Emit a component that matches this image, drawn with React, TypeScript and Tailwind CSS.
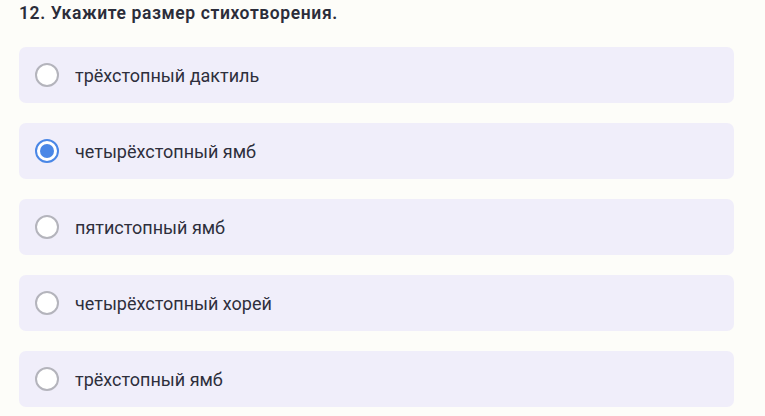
const options = [
  { label: 'трёхстопный дактиль', checked: false },
  { label: 'четырёхстопный ямб', checked: true },
  { label: 'пятистопный ямб', checked: false },
  { label: 'четырёхстопный хорей', checked: false },
  { label: 'трёхстопный ямб', checked: false },
];

function Radio({ checked }: { checked: boolean }) {
  if (checked) {
    return (
      <span className="w-[24px] h-[24px] rounded-full border-2 border-[#4a87e6] bg-white flex items-center justify-center shrink-0">
        <span className="w-[14px] h-[14px] rounded-full bg-[#4a87e6]" />
      </span>
    );
  }
  return <span className="w-[24px] h-[24px] rounded-full border-2 border-[#b4b4bc] bg-white shrink-0" />;
}

export default function App() {
  return (
    <div
      className="w-[765px] h-[416px] bg-[#fdfdf9] pl-[19px] pr-[31px] pt-[2px] overflow-hidden"
      style={{ fontFamily: 'Roboto, "Noto Sans", sans-serif' }}
    >
      <h1 className="text-[17.5px] font-semibold text-[#2b2d3a] leading-[22px] tracking-[0.6px]">
        12. Укажите размер стихотворения.
      </h1>
      <div className="mt-[23px] flex flex-col gap-[20px]">
        {options.map((o) => (
          <label
            key={o.label}
            className="h-[56px] rounded-[7px] bg-[#f0eefa] flex items-center gap-[16px] pl-[16px]"
          >
            <Radio checked={o.checked} />
            <span className="text-[18px] text-[#2e2f3c]">{o.label}</span>
          </label>
        ))}
      </div>
    </div>
  );
}
